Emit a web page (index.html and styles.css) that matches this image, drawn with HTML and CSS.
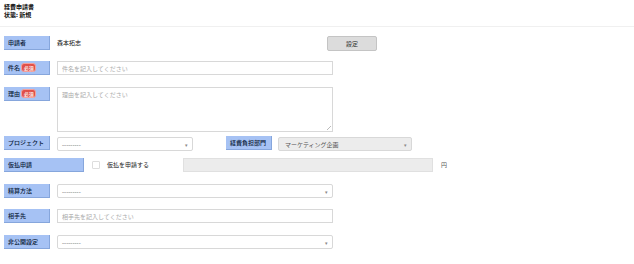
FILE: index.html
```html
<!DOCTYPE html>
<html lang="ja">
<head>
  <meta charset="utf-8">
  <link rel="stylesheet" href="styles.css">
  <title>経費申請書</title>
</head>
<body>
  <header class="head">
    <h1>経費申請書</h1>
    <div class="status">状態: 新規</div>
  </header>

  <form class="form">
    <div class="row r-user">
      <label class="lbl">申請者</label>
      <span class="value">森本拓志</span>
      <button type="button" class="btn">設定</button>
    </div>

    <div class="row r-wide">
      <label class="lbl">件名 <span class="req">必須</span></label>
      <input class="field" type="text" placeholder="件名を記入してください">
    </div>

    <div class="row r-area">
      <label class="lbl">理由 <span class="req">必須</span></label>
      <textarea class="field area" placeholder="理由を記入してください"></textarea>
    </div>

    <div class="row r-project">
      <label class="lbl">プロジェクト</label>
      <div class="select short"><span>---------</span><i>▾</i></div>
      <label class="lbl dept">経費負担部門</label>
      <div class="select dept-sel disabled"><span>マーケティング企画</span><i>▾</i></div>
    </div>

    <div class="row r-wide">
      <label class="lbl wide">仮払申請</label>
      <span class="check"></span>
      <span class="check-text">仮払を申請する</span>
      <input class="field amount" type="text" disabled>
      <span class="yen">円</span>
    </div>

    <div class="row">
      <label class="lbl">精算方法</label>
      <div class="select field"><span>---------</span><i>▾</i></div>
    </div>

    <div class="row r-wide">
      <label class="lbl">相手先</label>
      <input class="field" type="text" placeholder="相手先を記入してください">
    </div>

    <div class="row">
      <label class="lbl">非公開設定</label>
      <div class="select field"><span>---------</span><i>▾</i></div>
    </div>
  </form>
</body>
</html>
```

FILE: styles.css
```css
:root {
  --lbl-bg: #a6c2f4;
  --lbl-border: #86a6dc;
  --line: #d8d8d8;
  --muted: #aaa;
}

body {
  margin: 0;
  font-family: "Noto Sans CJK JP", "Noto Sans", sans-serif;
  font-size: 6px;
  color: #222;
  background: #fff;
}

.head {
  padding: 3px 4px 0;
  height: 23px;
  border-bottom: 1px solid #f0f0f0;
}

h1 {
  margin: 0;
  font-size: 6px;
  line-height: 8px;
  font-weight: bold;
  color: #111;
}

.status {
  font-size: 6px;
  line-height: 8px;
  font-weight: bold;
  color: #111;
}

.form {
  padding: 9px 4px 0;
}

/* rows: vertical rhythm follows the original */
.row {
  display: flex;
  align-items: flex-start;
  margin-bottom: 11px;
}
.r-user {
  margin-bottom: 10px;
}
.r-wide {
  margin-bottom: 12px;
}
.r-area {
  margin-bottom: 4px;
}
.r-project {
  margin-bottom: 7px;
}

.lbl {
  box-sizing: border-box;
  width: 46px;
  height: 14px;
  padding: 0 4px;
  line-height: 14px;
  background: var(--lbl-bg);
  border-bottom: 1px solid var(--lbl-border);
  border-right: 1px solid var(--lbl-border);
  color: #0a1a38;
  font-weight: 500;
  flex-shrink: 0;
  white-space: nowrap;
}
.lbl.wide {
  width: 80px;
}
.lbl.dept {
  margin-left: 33px;
}

.req {
  display: inline-block;
  padding: 0 1.5px;
  line-height: 7px;
  font-size: 5px;
  color: #fff;
  background: #e0504a;
  border: 1px solid #f3a09c;
  border-radius: 3px;
}

.value {
  margin-left: 7px;
  line-height: 14px;
  width: 270px;
  color: #111;
}

.btn {
  box-sizing: border-box;
  width: 50px;
  height: 15px;
  padding: 0;
  font: inherit;
  color: #333;
  background: #dcdcdc;
  border: 1px solid #c4c4c4;
  border-radius: 2px;
}

.field {
  box-sizing: border-box;
  margin: 0 0 0 7px;
  width: 276px;
  height: 14px;
  padding: 0 4px;
  font: inherit;
  color: #333;
  background: #fff;
  border: 1px solid var(--line);
  border-radius: 0;
  outline: none;
}
.field::placeholder {
  color: var(--muted);
}

.area {
  height: 45px;
  padding-top: 2px;
  resize: none;
  background:
    linear-gradient(135deg, transparent 45%, #bbb 45%, #bbb 55%, transparent 55%) right 1px bottom 1px / 4px 4px no-repeat,
    #fff;
}

.select {
  box-sizing: border-box;
  display: flex;
  justify-content: space-between;
  align-items: center;
  margin-left: 7px;
  height: 14px;
  padding: 0 4px;
  border: 1px solid var(--line);
  border-radius: 2px;
  background: #fff;
  color: #555;
}
.select i {
  font-style: normal;
  font-size: 5px;
  color: #888;
}
.select.short {
  width: 136px;
  margin-top: 1px;
}
.select.dept-sel {
  width: 134px;
  margin-left: 6px;
  margin-top: 1px;
  padding-left: 6px;
}
.select.disabled {
  background: #ececec;
  color: #555;
}

.check {
  box-sizing: border-box;
  width: 8px;
  height: 8px;
  margin: 3px 0 0 8px;
  border: 1px solid #ddd;
  border-radius: 1px;
  background: #fff;
}
.check-text {
  margin-left: 7px;
  line-height: 14px;
  width: 68px;
  color: #222;
}

.field.amount {
  margin-left: 8px;
  width: 250px;
  background: #ececec;
  border-color: #e0e0e0;
}

.yen {
  margin-left: 8px;
  line-height: 14px;
  color: #555;
}
```
